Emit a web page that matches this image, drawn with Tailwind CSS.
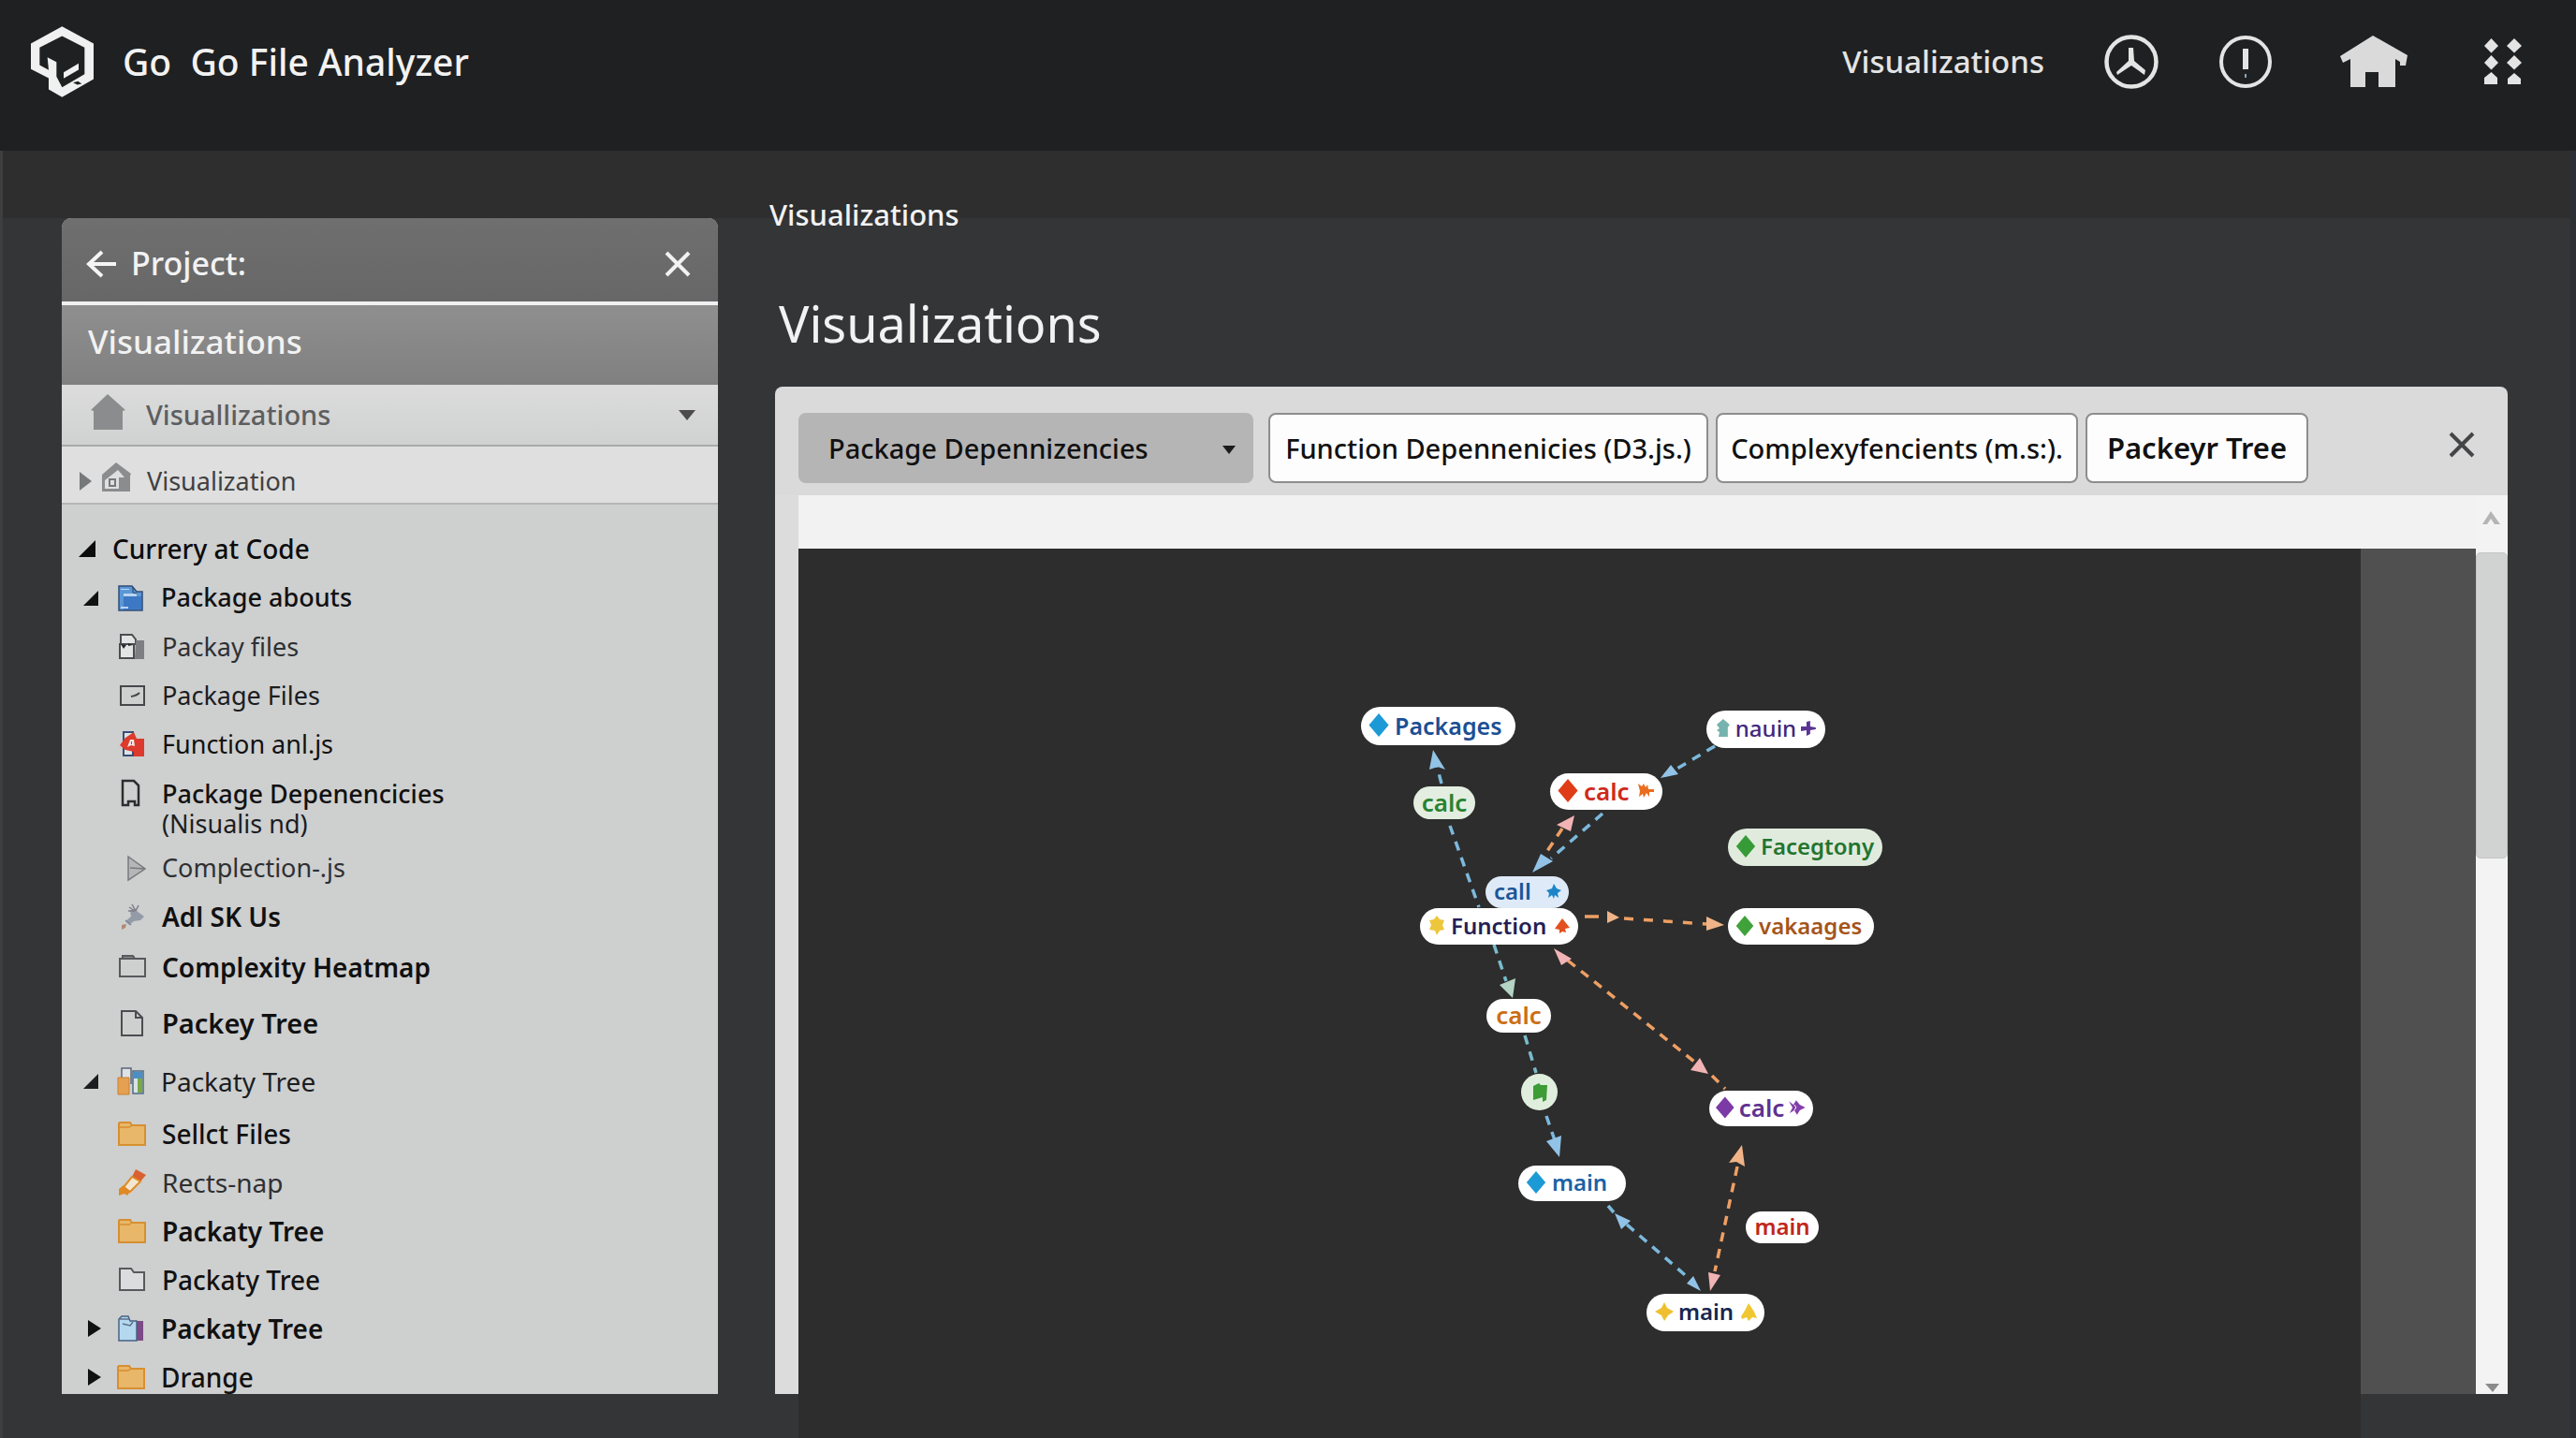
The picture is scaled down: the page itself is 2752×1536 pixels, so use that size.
<!DOCTYPE html>
<html lang="en">
<head>
<meta charset="utf-8">
<meta name="viewport" content="width=device-width, initial-scale=1">
<title>Go File Analyzer</title>
<script src="https://cdn.jsdelivr.net/npm/@tailwindcss/browser@4"></script>
</head>
<body class="flex min-h-screen flex-col bg-[#343537] font-['Noto_Sans',sans-serif] text-[#f2f2f2]">

<svg class="hidden" aria-hidden="true">
  <symbol id="diamond" viewBox="0 0 22 26"><path fill="currentColor" d="M11 0 22 13 11 26 0 13Z"/></symbol>
  <symbol id="caret-open" viewBox="0 0 18 18"><path fill="currentColor" d="M18 0V18H0Z"/></symbol>
  <symbol id="caret-closed" viewBox="0 0 14 18"><path fill="currentColor" d="M0 0 14 9 0 18Z"/></symbol>
  <symbol id="close" viewBox="0 0 28 28"><path fill="none" stroke="currentColor" stroke-width="4" d="M2 2 26 26M26 2 2 26"/></symbol>
  <symbol id="folder-orange" viewBox="0 0 30 30"><path fill="#e8b76a" stroke="#d78f30" stroke-width="2" d="M1 27V4L2 3H13L15 6H29V27Z"/><path fill="none" stroke="#d78f30" stroke-width="1.5" d="M1 8H12L15 6"/></symbol>
</svg>

<!-- App bar -->
<header class="h-[161px] bg-[#1f2021]">
  <div class="flex h-[132px] items-center pr-12 pl-[33px]">
    <svg class="h-[76px] w-[67px]" viewBox="39 29 201 227" aria-hidden="true">
      <path fill="#f0f0f0" fill-rule="evenodd" d="M139 29 240 84V198L139 256 96 231V195L39 166V84ZM139 60 67 97V153L96 169 92 128 121 143V190L139 224 211 182V97Z"/>
      <path fill="#f0f0f0" d="M144 176 192 148V168L144 196Z"/>
      <path fill="#1f2021" d="M174 209 190 205 202 213 188 216Z"/>
    </svg>
    <span class="ml-[31px] text-[39px] font-medium whitespace-nowrap">Go&nbsp; Go File Analyzer</span>
    <nav class="ml-auto flex items-center gap-16 text-[#e4e4e4]">
      <a href="#" class="text-[33px] font-medium">Visualizations</a>
      <button type="button" aria-label="History">
        <svg class="size-[58px]" viewBox="0 0 58 58"><circle cx="29" cy="29" r="26.500" fill="none" stroke="currentColor" stroke-width="4.500"/><path fill="currentColor" d="M26 14H31L32 28 44 38 43 43 29 33 14 43 13 40 26 28Z"/></svg>
      </button>
      <button type="button" aria-label="Alerts">
        <svg class="size-[58px]" viewBox="0 0 58 58"><circle cx="29" cy="29" r="26" fill="none" stroke="currentColor" stroke-width="4"/><path fill="currentColor" d="M26 15H32V37H26Z"/><path fill="#8aa4b8" d="M28 42H30V46H28Z"/></svg>
      </button>
      <button type="button" aria-label="Home" class="flex w-[88px] justify-center">
        <svg class="h-[56px] w-[72px]" viewBox="0 0 72 56"><path fill="#dadada" d="M35 0 72 21 70 32H64V28L59 25V55H41V39H27V55H11V25L3 29 0 22Z"/></svg>
      </button>
      <button type="button" aria-label="Apps" class="flex w-[60px] justify-center">
        <svg class="h-[50px] w-[40px]" viewBox="0 0 40 50"><path fill="currentColor" d="M7.500 0 15 8 7.500 15.500 0 8ZM32 0 40 8 32 15.500 24 8ZM7.500 18 15 26 7.500 33.500 0 26ZM32 18 40 26 32 33.500 24 26ZM7.500 36 14 42V49H0V42ZM32 37 39 43V49H25V43Z"/></svg>
      </button>
    </nav>
  </div>
</header>

<main class="flex flex-1 border-r-[6px] border-l-[3px] border-r-[#2c2f33] border-l-[#3d3f41] bg-[linear-gradient(#2e2e2f_72px,#343537_72px)] pl-[63px]">

  <!-- Project sidebar -->
  <aside class="mt-[72px] mb-[47px] flex w-[701px] shrink-0 flex-col overflow-hidden rounded-t-[10px] bg-[#cecfcf]">
    <div class="flex h-[93px] items-center border-b-4 border-[#f1eff1] bg-linear-to-b from-[#6f6f6f] to-[#676767] pt-2 pr-[29px] pl-[26px]">
      <button type="button" aria-label="Back"><svg class="h-[30px] w-[32px]" viewBox="0 0 32 30" fill="none" stroke="#f5f5f5" stroke-width="4"><path d="M17 2 3 15 17 28M3 15H32"/></svg></button>
      <h2 class="ml-4 text-[34px] font-medium">Project:</h2>
      <button type="button" aria-label="Close project" class="ml-auto"><svg class="size-[28px]"><use href="#close"/></svg></button>
    </div>
    <div class="flex h-[85px] items-center bg-linear-to-b from-[#8f8f8f] to-[#808080] pb-[6px] pl-[28px] text-[35px] font-medium">Visualizations</div>
    <div class="relative h-[66px] border-b-2 border-[#a9aaaa] bg-linear-to-b from-[#dcdcdc] to-[#d0d1d1]">
      <select aria-label="View" class="h-full w-full appearance-none bg-transparent pl-[90px] text-[29px] font-medium text-[#5d5e60]"><option>Visuallizations</option></select>
      <svg class="pointer-events-none absolute top-[10px] left-[31px] h-[38px] w-[37px]" viewBox="0 0 37 38"><path fill="#8b8c8d" d="M18 0 37 17 34 18V38H3V18L0 17Z"/></svg>
      <svg class="pointer-events-none absolute top-[27px] right-[24px] h-[11px] w-[18px]" viewBox="0 0 18 11"><path fill="#4c4c4c" d="M0 0H18L9 11Z"/></svg>
    </div>
    <a href="#" class="flex h-[62px] items-center border-b-2 border-[#b5b6b6] bg-[#dfdfdf] pt-[14px] pl-[19px] text-[27px] text-[#3f4042]">
      <svg class="h-[20px] w-[13px] text-[#77787a]" viewBox="0 0 14 18" preserveAspectRatio="none"><path fill="currentColor" d="M0 0 14 9 0 18Z"/></svg>
      <svg class="mb-2 ml-[11px] h-[32px] w-[31px]" viewBox="0 0 31 32"><path fill="#8b8c8e" fill-rule="evenodd" d="M15 0 31 12 30 14V31H0V13ZM17 8 12 12 3 19V28H18V16H24Z"/><path fill="none" stroke="#77787a" stroke-width="2" d="M8 18H14V25H8Z"/></svg>
      <span class="ml-[17px]">Visualization</span>
    </a>

    <ul class="pt-5 text-[27px] whitespace-nowrap text-[#1c1d1f]">
      <li><a href="#" class="flex h-[53px] items-center gap-[18px] pl-[18px] text-[28px] font-medium text-[#0c0c0c]">
        <svg class="size-[18px]"><use href="#caret-open"/></svg>Currery at Code</a></li>

      <li><a href="#" class="flex h-[53px] items-center gap-[17px] pl-[20px] font-medium text-[#111]">
        <span class="flex w-[22px] justify-center"><svg class="size-[16px]"><use href="#caret-open"/></svg></span>
        <svg class="size-[30px]" viewBox="0 0 30 30"><path fill="#5b97d6" stroke="#2f4d76" stroke-width="1.500" d="M2 2H16L21 8H27V28H2Z"/><path fill="#3d78c4" d="M7 13H26V27H7Z"/><path fill="#b9d5ef" d="M7 10H21V13H7ZM4 24H12V26H4ZM4 5H13V6H4Z"/><path fill="none" stroke="#27436b" d="M17 3V9L21 10"/></svg>
        Package abouts</a></li>

      <li><a href="#" class="flex h-[52px] items-center gap-[17px] pl-[60px] text-[#2e3033]">
        <svg class="size-[30px]" viewBox="0 0 30 30"><path fill="#e3e4e4" stroke="#4b4d50" stroke-width="2" d="M3 12V2H15L19 7V13M2 12H17V27H2Z"/><path fill="#7d7f82" d="M19 8H28V28H18Z"/><path fill="#27292c" d="M3 12 9 13 6 17ZM11 11 16 13 11 14Z"/></svg>
        Packay files</a></li>

      <li><a href="#" class="flex h-[52px] items-center gap-[17px] pl-[60px]">
        <svg class="size-[30px]" viewBox="0 0 30 30" fill="none" stroke="#45474a" stroke-width="2"><path d="M3 5H28V25H3ZM14 16Q20 15 23 12"/></svg>
        Package Files</a></li>

      <li><a href="#" class="flex h-[52px] items-center gap-[17px] pl-[60px] text-[#111]">
        <svg class="size-[30px]" viewBox="0 0 30 30"><path fill="#dfe3e8" stroke="#3a4d78" stroke-width="2" d="M6 2H16V27H6Z"/><path fill="#dc3a2c" d="M8 8 17 2 20 9H28V28H17V23L8 21 2 16Z"/><path fill="#f1e5e4" d="M10 18 13 10H17L18 17 14 16Z"/><path fill="#dc3a2c" d="M14 12H15V15H14Z"/></svg>
        Function anl.js</a></li>

      <li><a href="#" class="flex h-[80px] items-start gap-[17px] pt-[11px] pl-[60px] leading-[32px]">
        <svg class="size-[30px]" viewBox="0 0 30 30"><path fill="none" stroke="#2b2d30" stroke-width="2.500" d="M5 2H17L22 7V28H18V24H11V28H5Z"/></svg>
        <span><span class="block font-medium text-[#111]">Package Depenencicies</span><span class="block">(Nisualis nd)</span></span></a></li>

      <li><a href="#" class="flex h-[52px] items-center gap-[17px] pl-[60px] text-[#2e3033]">
        <svg class="size-[30px]" viewBox="0 0 30 30"><path fill="#b5b6b8" stroke="#77797c" stroke-width="1.500" d="M11 3 29 16 11 28ZM13 15 29 16"/></svg>
        Complection-.js</a></li>

      <li><a href="#" class="flex h-[52px] items-center gap-[17px] pl-[60px] text-[28px] font-semibold text-[#111]">
        <svg class="size-[30px]" viewBox="0 0 30 30"><path fill="#949ba8" d="M13 8 20 9 28 15 24 19 17 20 12 24 8 20 14 15Z"/><path fill="none" stroke="#7b7f87" stroke-width="1.500" d="M12 5 18 9M15 2 19 9M22 3 19 9M11 9H18"/><path fill="none" stroke="#7d8797" stroke-width="1.500" d="M8 19 14 24"/><path fill="#b08a72" d="M4 24 9 23 8 27 4 29Z"/></svg>
        Adl SK Us</a></li>

      <li><a href="#" class="flex h-[56px] items-center gap-[17px] pl-[60px] text-[28px] font-semibold text-[#111]">
        <svg class="size-[30px]" viewBox="0 0 30 30" fill="none" stroke="#57595c" stroke-width="2"><path d="M2 6H29V25H2Z"/><path fill="#8d8f91" d="M5 6V3H16L18 6Z"/></svg>
        Complexity Heatmap</a></li>

      <li><a href="#" class="flex h-[64px] items-center gap-[17px] pl-[60px] text-[29px] font-semibold text-[#111]">
        <svg class="size-[30px]" viewBox="0 0 30 30" fill="none" stroke="#4b4d50" stroke-width="2"><path d="M4 2H19L26 9V28H4ZM19 2V9H26"/></svg>
        Packey Tree</a></li>

      <li><a href="#" class="flex h-[60px] items-center gap-[17px] pl-[20px] text-[28px]">
        <span class="flex w-[22px] justify-center"><svg class="size-[16px]"><use href="#caret-open"/></svg></span>
        <svg class="size-[30px]" viewBox="0 0 30 30"><path fill="#dfe2e4" stroke="#5b6675" stroke-width="1.500" d="M5 12V1H15V18"/><path fill="#e6a052" stroke="#c9812f" d="M1 11H13V29H1Z"/><path fill="#d7e3e2" stroke="#4d6a86" stroke-width="1.500" d="M17 4H28V28H17Z"/><path fill="#4b8fc4" d="M18 5H27V12H18Z"/><path fill="#79a845" d="M22 12H27V27H22Z"/></svg>
        Packaty Tree</a></li>

      <li><a href="#" class="flex h-[52px] items-center gap-[17px] pl-[60px] text-[28px] font-medium text-[#111]">
        <svg class="size-[30px]"><use href="#folder-orange"/></svg>
        Sellct Files</a></li>

      <li><a href="#" class="flex h-[52px] items-center gap-[17px] pl-[60px] text-[28px] text-[#2e3033]">
        <svg class="size-[30px]" viewBox="0 0 30 30"><path fill="#d9602f" d="M19 1 30 7 24 14 15 9Z"/><path fill="#f4e6cf" stroke="#df8a25" stroke-width="2" d="M15 9 24 14 13 25 6 20Z"/><path fill="#df8a25" d="M6 18 13 25 10 29 7 27 1 29V22Z"/></svg>
        Rects-nap</a></li>

      <li><a href="#" class="flex h-[52px] items-center gap-[17px] pl-[60px] text-[28px] font-semibold text-[#111]">
        <svg class="size-[30px]"><use href="#folder-orange"/></svg>
        Packaty Tree</a></li>

      <li><a href="#" class="flex h-[52px] items-center gap-[17px] pl-[60px] text-[28px] font-medium text-[#111]">
        <svg class="size-[30px]" viewBox="0 0 30 30" fill="#dbdcdd" stroke="#57595c" stroke-width="2"><path d="M2 26V3H14L17 7H28V26Z"/></svg>
        Packaty Tree</a></li>

      <li><a href="#" class="flex h-[52px] items-center gap-[17px] pl-[20px] text-[28px] font-semibold text-[#111]">
        <span class="flex w-[22px] justify-end"><svg class="h-[18px] w-[14px]"><use href="#caret-closed"/></svg></span>
        <svg class="size-[30px]" viewBox="0 0 30 30"><path fill="#7c4a86" d="M15 7H28V28H15Z"/><path fill="#b4d9ef" stroke="#4a6283" stroke-width="1.500" d="M2 28V5L5 2H12L14 7H21V28Z"/><path fill="none" stroke="#5c6f8b" stroke-width="1.500" d="M3 5H13M6 10 14 12 17 8"/></svg>
        Packaty Tree</a></li>

      <li><a href="#" class="flex h-[44px] items-center gap-[17px] pt-2 pl-[20px] text-[28px] font-medium text-[#111]">
        <span class="flex w-[22px] justify-end"><svg class="h-[18px] w-[14px]"><use href="#caret-closed"/></svg></span>
        <svg class="size-[30px]"><use href="#folder-orange"/></svg>
        Drange</a></li>
    </ul>
  </aside>

  <!-- Visualization workspace -->
  <section class="ml-[55px] flex min-w-0 flex-1 flex-col pt-12 pr-[67px]">
    <p class="text-[31px] leading-[40px] font-medium">Visualizations</p>
    <h1 class="mt-16 pl-[10px] text-[54px] leading-[64px]">Visualizations</h1>

    <div class="mt-9 ml-[6px] flex flex-1 flex-col">
      <div class="flex h-[116px] items-start rounded-t-[8px] bg-[#dadada] pt-7 pr-[35px] pl-[25px] text-[29px] font-medium text-[#111]">
        <div class="flex gap-2">
          <div class="relative mr-2 h-[75px] w-[486px]">
            <select aria-label="Package view" class="h-full w-full appearance-none rounded-[8px] bg-[#b5b5b5] px-8"><option>Package Depennizencies</option></select>
            <svg class="pointer-events-none absolute top-[35px] right-[19px] h-[9px] w-[14px]" viewBox="0 0 14 9"><path fill="#1b1b1b" d="M0 0H14L7 9Z"/></svg>
          </div>
          <button type="button" class="h-[75px] w-[470px] rounded-[8px] border-2 border-[#8c8d8f] bg-[#fdfdfd] whitespace-nowrap">Function Depennenicies (D3.js.)</button>
          <button type="button" class="h-[75px] w-[387px] rounded-[8px] border-2 border-[#8c8d8f] bg-[#fdfdfd] whitespace-nowrap">Complexyfencients (m.s:).</button>
          <button type="button" class="h-[75px] w-[238px] rounded-[8px] border-2 border-[#8c8d8f] bg-[#fdfdfd] text-[31px] font-semibold whitespace-nowrap">Packeyr Tree</button>
        </div>
        <button type="button" aria-label="Close panel" class="mt-5 ml-auto text-[#444547]"><svg class="size-[28px]"><use href="#close"/></svg></button>
      </div>

      <div class="flex flex-1">
        <div class="mb-[47px] w-[25px] bg-[#dcdcdc]"></div>
        <div class="flex min-w-0 flex-1 flex-col">
          <div class="h-[57px] bg-[#f2f2f2]"></div>
          <div class="flex flex-1">
            <!-- Dependency graph -->
            <div class="relative flex-1 overflow-hidden bg-[#2d2d2d] text-[24px] leading-[30px] font-semibold">
              <svg class="absolute top-0 left-0 h-[900px] w-[1669px]" viewBox="853 586 1669 900" fill="none" stroke-width="3.500" stroke-dasharray="10 8" aria-hidden="true">
                <g stroke="#7cb9dc">
                  <path d="M1540 837 1535 818M1549 882 1580 969M1712 869 1657 917M1832 797 1790 822"/>
                  <path stroke="#79bccb" d="M1596 1009 1609 1048M1629 1106 1641 1146"/>
                  <path d="M1652 1192 1661 1218M1718 1288 1724 1295M1738 1308 1806 1367"/>
                </g>
                <g stroke="#ee9f64">
                  <path d="M1669 885 1653 909M1675 1026 1810 1134M1829 1149 1843 1163M1856 1246 1832 1358"/>
                  <path stroke-dasharray="10 11" d="M1735 981 1824 987"/>
                  <path stroke-dasharray="none" d="M1693 979H1708"/>
                </g>
                <g stroke="none">
                  <path fill="#92c3e6" d="M1531 801 1544 822 1536 819 1527 822ZM1637 932 1646 912 1659 920ZM1774 831 1785 817 1793 827ZM1666 1236 1652 1219 1668 1213ZM1725 1296 1742 1304 1732 1313ZM1817 1379 1809 1363 1802 1371Z"/>
                  <path fill="#b4d5c5" d="M1616 1066 1602 1052 1619 1045Z"/>
                  <path fill="#f2b3b4" d="M1682 871 1663 881 1678 888ZM1660 1013 1679 1024 1668 1031ZM1825 1147 1816 1130 1806 1143ZM1827 1379 1825 1359 1838 1362Z"/>
                  <path fill="#f0b488" d="M1730 980 1717 973V986ZM1842 988 1823 979V994ZM1861 1223 1847 1242 1855 1241 1864 1246Z"/>
                </g>
              </svg>

              <div class="absolute top-[169px] left-[601px] flex h-[41px] w-[165px] items-center gap-[6px] rounded-full bg-white pb-[2px] pl-2 text-[25px] text-[#1c4f94]"><svg class="h-[25px] w-[22px] text-[#1c9ad6]"><use href="#diamond"/></svg>Packages</div>

              <div class="absolute top-[254px] left-[657px] flex h-[35px] w-[66px] items-center justify-center rounded-full bg-[#e3eee0] pb-[2px] text-[26px] text-[#2a8232]">calc</div>

              <div class="absolute top-[240px] left-[803px] flex h-[39px] w-[120px] items-center gap-[6px] rounded-full bg-white pr-[9px] pb-[2px] pl-2 text-[26px] text-[#cf2a1c]"><svg class="h-[25px] w-[22px] text-[#df3d17]"><use href="#diamond"/></svg>calc<svg class="ml-auto h-[15px] w-[17px]" viewBox="0 0 17 15"><path fill="#e96c1f" d="M0 0 4 3 6 0 8 4 10 1 11 6H17V9H12L12 14 9 10 6 15 5 11 1 14 2 8Z"/></svg></div>

              <div class="absolute top-[173px] left-[970px] flex h-[40px] w-[127px] items-center gap-[5px] rounded-full bg-white pr-[10px] pb-[2px] pl-[10px] text-[#43287c]"><svg class="h-[20px] w-[16px]" viewBox="0 0 16 20"><path fill="#76b3ae" d="M8 0 15 6 13 9V19H3L4 14 1 12 4 10 1 6Z"/></svg><span class="font-medium">nauin</span><svg class="ml-auto size-[16px]" viewBox="0 0 16 16"><path fill="#5b3594" d="M6 1 10 0V6L16 7V9L10 10V14L6 16V10L0 11V6H6Z"/></svg></div>

              <div class="absolute top-[299px] left-[993px] flex h-[40px] w-[165px] items-center gap-[5px] rounded-full bg-[#e0ebde] pb-[2px] pl-2 text-[#23742e]"><svg class="h-[24px] w-[22px] text-[#369b36]"><use href="#diamond"/></svg>Facegtony</div>

              <div class="absolute top-[350px] left-[734px] flex h-[34px] w-[89px] items-center rounded-full bg-[#dfeaf8] pr-[8px] pb-[2px] pl-[9px] text-[#1b5698]">call<svg class="ml-auto size-[16px]" viewBox="0 0 16 16"><path fill="#1d85c6" d="M8 0 11 5 16 7 12 10 13 15 9 12 8 16 6 12 2 15 3 10 0 7 6 5Z"/></svg></div>

              <div class="absolute top-[384px] left-[664px] flex h-[39px] w-[169px] items-center gap-[6px] rounded-full bg-white pr-[9px] pb-[2px] pl-[9px] text-[#251f55]"><svg class="h-[21px] w-[18px]" viewBox="0 0 18 21"><path fill="#edc63c" d="M9 0 12 4 17 5 15 10 17 15 12 16 9 21 7 16 1 15 3 10 1 5 6 4Z"/></svg>Function<svg class="ml-auto h-[16px] w-[16px]" viewBox="0 0 16 16"><path fill="#e2501f" d="M8 0 16 10 11 11 12 15 8 14 5 16V12L0 11Z"/></svg></div>

              <div class="absolute top-[384px] left-[993px] flex h-[39px] w-[156px] items-center gap-[5px] rounded-full bg-white pb-[2px] pl-2 text-[#a4551a]"><svg class="h-[22px] w-[20px] text-[#3fa23a]"><use href="#diamond"/></svg>vakaages</div>

              <div class="absolute top-[481px] left-[735px] flex h-[36px] w-[69px] items-center justify-center rounded-full bg-white pb-[2px] text-[26px] text-[#cc6f14]">calc</div>

              <div class="absolute top-[561px] left-[772px] flex size-[39px] items-center justify-center rounded-full bg-[#dfeedd]"><svg class="h-[20px] w-[16px]" viewBox="0 0 16 20"><path fill="#3c9c36" d="M1 3 7 0 9 2H16L15 18 11 20 11 15 1 18Z"/></svg></div>

              <div class="absolute top-[659px] left-[769px] flex h-[38px] w-[115px] items-center gap-[6px] rounded-full bg-white pb-[2px] pl-2 text-[#1a62a5]"><svg class="h-[24px] w-[22px] text-[#1c9ad6]"><use href="#diamond"/></svg>main</div>

              <div class="absolute top-[579px] left-[973px] flex h-[38px] w-[111px] items-center gap-[5px] rounded-full bg-white pr-[8px] pb-[2px] pl-[7px] text-[26px] text-[#5f3290]"><svg class="h-[24px] w-[20px] text-[#7c3aa6]"><use href="#diamond"/></svg>calc<svg class="ml-auto h-[16px] w-[18px]" viewBox="0 0 18 16"><path fill="#8340aa" d="M0 1 5 5 8 0 12 5 18 8 12 11 9 16 6 11 1 14 4 8Z"/><path stroke="#fff" d="M6 5 8 8 6 11" fill="none"/></svg></div>

              <div class="absolute top-[708px] left-[1012px] flex h-[34px] w-[78px] items-center justify-center rounded-full bg-white pb-[2px] text-[#c0261b]">main</div>

              <div class="absolute top-[796px] left-[906px] flex h-[40px] w-[126px] items-center gap-[5px] rounded-full bg-white pr-[8px] pb-[2px] pl-[9px] text-[#17264f]"><svg class="size-[20px]" viewBox="0 0 20 20"><path fill="#efbf2f" d="M10 0 13 6 20 10 14 14 10 20 7 14 0 10 7 6Z"/></svg>main<svg class="ml-auto h-[19px] w-[17px]" viewBox="0 0 17 19"><path fill="#f0c732" d="M8 0 14 9 17 16 12 15 10 17 8 19 6 15 1 17 0 14 4 8Z"/></svg></div>
            </div>
            <div class="mb-[47px] w-[123px] bg-[#505050]"></div>
          </div>
        </div>
        <!-- Scroll rail -->
        <div class="mb-[47px] flex w-[34px] flex-col items-center bg-[#f3f3f3]">
          <svg class="mt-[17px] mr-[2px] h-[14px] w-[19px]" viewBox="0 0 19 14"><path fill="#b4b4b4" d="M9 0 19 14H13L9 8 5 14H0Z"/></svg>
          <div class="mt-[30px] h-[327px] w-full rounded-[5px] border border-[#c4c4c4] bg-[#d1d2d2]"></div>
          <svg class="mt-auto mb-[2px] h-[9px] w-[15px]" viewBox="0 0 15 9"><path fill="#8b8b8b" d="M0 0H15L8 9Z"/></svg>
        </div>
      </div>
    </div>
  </section>
</main>
</body>
</html>
